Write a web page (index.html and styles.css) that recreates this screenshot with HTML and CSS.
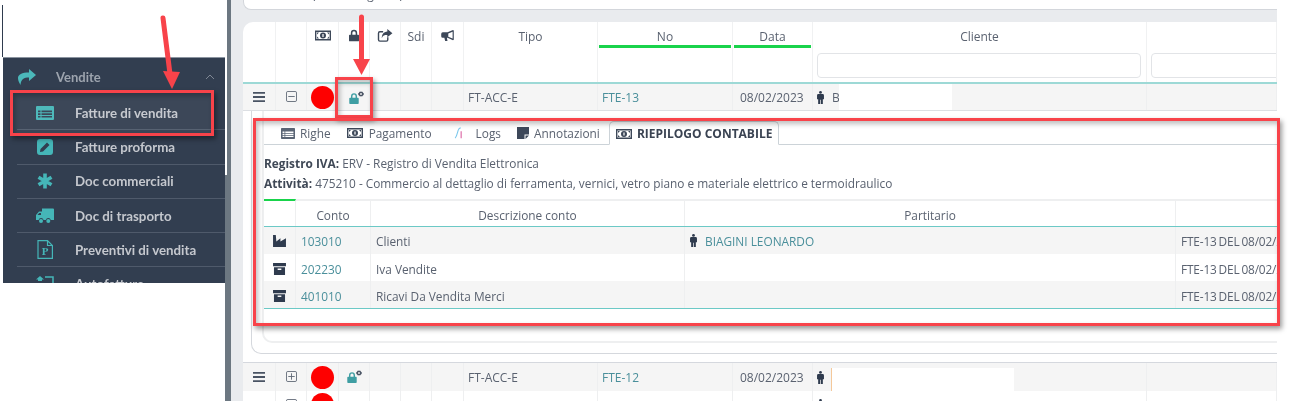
FILE: index.html
```html
<!DOCTYPE html>
<html lang="it">
<head>
    <meta charset="UTF-8">
    <title>Fatture di vendita</title>
    <link rel="stylesheet" href="styles.css">
</head>
<body>
    <svg class="sprite" xmlns="http://www.w3.org/2000/svg">
        <symbol id="i-share" viewBox="0 0 18 16"><path d="M11 0l7 6-7 6V8.500C6 8.500 3 10 2.500 16 .5 13 0 10.500 0 9c0-3.500 4-5.500 11-5.500z"/></symbol>
        <symbol id="i-list" viewBox="0 0 18 14"><path fill-rule="evenodd" d="M1 0h16a1 1 0 0 1 1 1v12a1 1 0 0 1-1 1H1a1 1 0 0 1-1-1V1a1 1 0 0 1 1-1zM2 4.500v1.700h2.500V4.500zM5.500 4.500v1.700H16V4.500zM2 7.200v1.700h2.500V7.200zM5.500 7.200v1.700H16V7.200zM2 9.900v1.700h2.500V9.900zM5.500 9.900v1.700H16V9.900z"/></symbol>
        <symbol id="i-pencil" viewBox="0 0 16 16"><path fill-rule="evenodd" d="M3 0h10a3 3 0 0 1 3 3v10a3 3 0 0 1-3 3H3a3 3 0 0 1-3-3V3a3 3 0 0 1 3-3zM3.500 10l-.5 3 3-.5 6.500-6.500-2.500-2.500z"/></symbol>
        <symbol id="i-asterisk" viewBox="0 0 16 16"><path fill="none" stroke="currentColor" stroke-width="3.600" d="M8 .5v15M1.500 4.200l13 7.600M14.500 4.200l-13 7.600"/></symbol>
        <symbol id="i-truck" viewBox="0 0 18 15"><path fill-rule="evenodd" d="M6 0h11a1 1 0 0 1 1 1v10.500h-3.200a2.600 2.600 0 0 0-5 0H7.600a2.600 2.600 0 0 0-5 0H0V6.500L3 3h3zM1.500 6.500H5V4.500H3.200z"/><circle cx="5" cy="12.500" r="2"/><circle cx="12.300" cy="12.500" r="2"/></symbol>
        <symbol id="i-file" viewBox="0 0 16 19"><path fill="none" stroke="currentColor" stroke-width="1.200" d="M1 .6h9.500L15.400 5.500V18.400H1zM10.500 .6V5.500h4.900"/></symbol>
        <symbol id="i-auto" viewBox="0 0 18 16"><path d="M0 3.500L4 0l4 3.500H6V5H2V3.500z"/><path fill="none" stroke="currentColor" stroke-width="1.500" d="M9 1h8v8"/></symbol>
        <symbol id="i-money" viewBox="0 0 16 12"><path fill-rule="evenodd" d="M0 1h16v10H0zM1.400 2.400v7.200h13.200V2.400z"/><path fill-rule="evenodd" d="M8 3a3 3 0 1 1 0 6 3 3 0 0 1 0-6zM7.400 4.500v3h1.200v-3z"/><path d="M2 3h2L2 5zM14 3v2l-2-2zM2 9V7l2 2zM14 9h-2l2-2z"/></symbol>
        <symbol id="i-lock" viewBox="0 0 12 14"><path fill-rule="evenodd" d="M2.200 6V4a3.800 3.800 0 0 1 7.600 0v2H11a1 1 0 0 1 1 1v6a1 1 0 0 1-1 1H1a1 1 0 0 1-1-1V7a1 1 0 0 1 1-1zM4 6h4V4a2 2 0 0 0-4 0z"/></symbol>
        <symbol id="i-out" viewBox="0 0 16 14"><path fill="none" stroke="currentColor" stroke-width="1.500" d="M6 3H2.500A1.500 1.500 0 0 0 1 4.500v7A1.500 1.500 0 0 0 2.500 13h7a1.500 1.500 0 0 0 1.500-1.500V9"/><path d="M10.500 0L16 4.500 10.500 9V6.500C7.500 6.500 5.500 7 4.500 10 4.500 6 6.500 3 10.500 2.700z"/></symbol>
        <symbol id="i-horn" viewBox="0 0 16 14"><path fill-rule="evenodd" d="M15 0l1 .5v12l-1 .5-7-3H7.200L8 14H5L4 10H2a2 2 0 0 1-2-2V5a2 2 0 0 1 2-2h6zM14.500 2.200L9 4.300v4.400l5.500 2.100z"/></symbol>
        <symbol id="i-bars" viewBox="0 0 12 10"><path d="M0 0h12v1.800H0zM0 4.100h12v1.800H0zM0 8.200h12V10H0z"/></symbol>
        <symbol id="i-minus" viewBox="0 0 12 12"><path fill="none" stroke="currentColor" d="M2 .5h8A1.500 1.500 0 0 1 11.500 2v8a1.500 1.500 0 0 1-1.500 1.500H2A1.500 1.500 0 0 1 .5 10V2A1.500 1.500 0 0 1 2 .5zM2.500 6h7"/></symbol>
        <symbol id="i-plus" viewBox="0 0 12 12"><path fill="none" stroke="currentColor" d="M2 .5h8A1.500 1.500 0 0 1 11.500 2v8a1.500 1.500 0 0 1-1.500 1.500H2A1.500 1.500 0 0 1 .5 10V2A1.500 1.500 0 0 1 2 .5zM2.500 6h7M6 2.500v7"/></symbol>
        <symbol id="i-gear" viewBox="0 0 8 8"><path fill-rule="evenodd" d="M4 0l.8 1.200L6.200 1 6.500 2.300 8 3 7.200 4 8 5.200 6.500 5.700 6.200 7 4.800 6.800 4 8 3.200 6.800 1.800 7 1.500 5.700 0 5.200.8 4 0 3 1.500 2.300 1.800 1 3.200 1.200zM4 2.800a1.200 1.200 0 1 0 0 2.400 1.200 1.200 0 0 0 0-2.400z"/></symbol>
        <symbol id="i-male" viewBox="0 0 8 15"><circle cx="4" cy="1.600" r="1.600"/><path d="M1.500 3.600h5A1.500 1.500 0 0 1 8 5.100V9.500H6.700V15H4.400V10H3.600v5H1.300V9.500H0V5.100a1.500 1.500 0 0 1 1.500-1.500z"/></symbol>
        <symbol id="i-factory" viewBox="0 0 14 13"><path d="M0 0h3l.6 7L8 3.500V7l6-3.500V13H0z"/></symbol>
        <symbol id="i-archive" viewBox="0 0 14 13"><path fill-rule="evenodd" d="M0 0h14v3.500H0zM1 4.500h12V13H1zM5 6v1.500h4V6z"/></symbol>
        <symbol id="i-note" viewBox="0 0 12 12"><path d="M0 0h12v7.500H7.500V12H0zM8.500 8.500H12L8.500 12z"/></symbol>
        <symbol id="i-logs" viewBox="0 0 10 14"><path fill="none" stroke="#7cc8ec" stroke-width="1.300" d="M.5 13C2.500 11 3 7 4 4 4.500 2.500 5.500 1 7 1"/><path fill="none" stroke="#d8579b" stroke-width="1.200" d="M7.500 5v8"/></symbol>
    </svg>

    <div class="shot">
        <aside class="sidebar">
            <div class="menu">
                <div class="menu-head">
                    <svg class="head-icon"><use href="#i-share"/></svg>
                    <span class="head-label">Vendite</span>
                    <svg class="chevron" viewBox="0 0 10 6"><path d="M1 5l4-4 4 4"/></svg>
                </div>
                <div class="menu-item"><svg class="menu-icon"><use href="#i-list"/></svg>Fatture di vendita</div>
                <div class="menu-item"><svg class="menu-icon"><use href="#i-pencil"/></svg>Fatture proforma</div>
                <div class="menu-item"><svg class="menu-icon"><use href="#i-asterisk"/></svg>Doc commerciali</div>
                <div class="menu-item"><svg class="menu-icon"><use href="#i-truck"/></svg>Doc di trasporto</div>
                <div class="menu-item">
                    <svg class="menu-icon tall" viewBox="0 0 16 19"><use href="#i-file" width="16" height="19"/><text class="file-letter" x="8" y="15">P</text></svg>
                    Preventivi di vendita
                </div>
                <div class="menu-item"><svg class="menu-icon"><use href="#i-auto"/></svg>Autofatture</div>
            </div>
        </aside>
        <div class="rail"></div>

        <main class="content">
            <div class="filter-panel"><span class="filter-text">(ultimi 30 giorni)</span></div>

            <section class="doc-panel">
                <div class="doc-row doc-head">
                    <div class="hcell"></div>
                    <div class="hcell"></div>
                    <div class="hcell"><svg class="hicon"><use href="#i-money"/></svg></div>
                    <div class="hcell"><svg class="hicon narrow"><use href="#i-lock"/></svg></div>
                    <div class="hcell"><svg class="hicon"><use href="#i-out"/></svg></div>
                    <div class="hcell">Sdi</div>
                    <div class="hcell"><svg class="hicon horn"><use href="#i-horn"/></svg></div>
                    <div class="hcell">Tipo</div>
                    <div class="hcell sorted"><span class="sort-label">No</span></div>
                    <div class="hcell sorted"><span class="sort-label">Data</span></div>
                    <div class="hcell">Cliente<input class="filter-input"></div>
                    <div class="hcell"><input class="filter-input wide"></div>
                </div>

                <div class="doc-row doc-line shaded first">
                    <div class="cell center"><svg class="bars"><use href="#i-bars"/></svg></div>
                    <div class="cell center"><svg class="toggle"><use href="#i-minus"/></svg></div>
                    <div class="cell center"><span class="status"></span></div>
                    <div class="cell lock-cell"><svg class="lock"><use href="#i-lock"/></svg><svg class="gear"><use href="#i-gear"/></svg></div>
                    <div class="cell"></div>
                    <div class="cell"></div>
                    <div class="cell"></div>
                    <div class="cell">FT-ACC-E</div>
                    <div class="cell link">FTE-13</div>
                    <div class="cell date">08/02/2023</div>
                    <div class="cell client"><svg class="male"><use href="#i-male"/></svg><span class="initial">B</span><span class="redact"></span></div>
                    <div class="cell"></div>
                </div>

                <div class="detail">
                    <div class="card">
                        <div class="subcard">
                            <div class="tabs">
                                <div class="tab"><svg class="tab-icon list"><use href="#i-list"/></svg>Righe</div>
                                <div class="tab"><svg class="tab-icon"><use href="#i-money"/></svg>Pagamento</div>
                                <div class="tab logs"><svg class="tab-icon"><use href="#i-logs"/></svg>Logs</div>
                                <div class="tab"><svg class="tab-icon small"><use href="#i-note"/></svg>Annotazioni</div>
                                <div class="tab active"><svg class="tab-icon"><use href="#i-money"/></svg>RIEPILOGO CONTABILE</div>
                            </div>
                            <div class="info">
                                <div><b>Registro IVA:</b> ERV - Registro di Vendita Elettronica</div>
                                <div><b>Attività:</b> 475210 - Commercio al dettaglio di ferramenta, vernici, vetro piano e materiale elettrico e termoidraulico</div>
                            </div>
                            <div class="ledger">
                                <div class="ledger-row ledger-head">
                                    <div class="lh mark"></div>
                                    <div class="lh">Conto</div>
                                    <div class="lh">Descrizione conto</div>
                                    <div class="lh">Partitario</div>
                                    <div class="lh"></div>
                                </div>
                                <div class="ledger-row shaded">
                                    <div class="lc center"><svg class="acc-icon"><use href="#i-factory"/></svg></div>
                                    <div class="lc link">103010</div>
                                    <div class="lc">Clienti</div>
                                    <div class="lc link"><svg class="male"><use href="#i-male"/></svg>BIAGINI LEONARDO</div>
                                    <div class="lc">FTE-13 DEL 08/02/2023</div>
                                </div>
                                <div class="ledger-row">
                                    <div class="lc center"><svg class="acc-icon"><use href="#i-archive"/></svg></div>
                                    <div class="lc link">202230</div>
                                    <div class="lc">Iva Vendite</div>
                                    <div class="lc"></div>
                                    <div class="lc">FTE-13 DEL 08/02/2023</div>
                                </div>
                                <div class="ledger-row shaded">
                                    <div class="lc center"><svg class="acc-icon"><use href="#i-archive"/></svg></div>
                                    <div class="lc link">401010</div>
                                    <div class="lc">Ricavi Da Vendita Merci</div>
                                    <div class="lc"></div>
                                    <div class="lc">FTE-13 DEL 08/02/2023</div>
                                </div>
                            </div>
                        </div>
                    </div>
                </div>

                <div class="doc-row doc-line tall-line shaded">
                    <div class="cell center"><svg class="bars"><use href="#i-bars"/></svg></div>
                    <div class="cell center"><svg class="toggle"><use href="#i-plus"/></svg></div>
                    <div class="cell center"><span class="status"></span></div>
                    <div class="cell lock-cell offset"><svg class="lock"><use href="#i-lock"/></svg><svg class="gear"><use href="#i-gear"/></svg></div>
                    <div class="cell"></div>
                    <div class="cell"></div>
                    <div class="cell"></div>
                    <div class="cell">FT-ACC-E</div>
                    <div class="cell link">FTE-12</div>
                    <div class="cell date">08/02/2023</div>
                    <div class="cell client"><svg class="male"><use href="#i-male"/></svg><span class="redact long"></span></div>
                    <div class="cell"></div>
                </div>

                <div class="doc-row doc-line tall-line last">
                    <div class="cell center"><svg class="bars"><use href="#i-bars"/></svg></div>
                    <div class="cell center"><svg class="toggle"><use href="#i-plus"/></svg></div>
                    <div class="cell center"><span class="status"></span></div>
                    <div class="cell lock-cell"></div>
                    <div class="cell"></div>
                    <div class="cell"></div>
                    <div class="cell"></div>
                    <div class="cell">FT-ACC-E</div>
                    <div class="cell link">FTE-11</div>
                    <div class="cell date">04/02/2023</div>
                    <div class="cell client"><svg class="male"><use href="#i-male"/></svg></div>
                    <div class="cell"></div>
                </div>
            </section>
        </main>

        <!-- annotazioni rosse sopra lo screenshot -->
        <div class="red-box box-menu"></div>
        <div class="red-box box-lock"></div>
        <div class="red-box box-detail"></div>
        <svg class="arrows" viewBox="0 0 1290 401">
            <path class="shaft" d="M163 18L170 74"/>
            <path class="head" d="M163 71L180 72 172 89z"/>
            <path class="shaft" d="M361.500 17V62"/>
            <path class="head" d="M353 59H370L361.500 75z"/>
        </svg>
    </div>
</body>
</html>
```

FILE: styles.css
```css
* {
    box-sizing: border-box;
}
html, body {
    margin: 0;
    padding: 0;
    background: white;
}
.sprite {
    position: absolute;
    width: 0;
    height: 0;
}
.shot {
    position: relative;
    display: flex;
    width: 1290px;
    height: 401px;
    overflow: hidden;
    font-family: "Open Sans", "Noto Sans", sans-serif;
    font-size: 12px;
    color: #5a6270;
    filter: blur(0.35px);
}

/* sidebar */
.sidebar {
    width: 225px;
    padding: 57px 0 0 3px;
    background: linear-gradient(#2f3b4e, #2f3b4e) 2px 5px / 1px 52px no-repeat, white;
    flex: none;
}
.menu {
    height: 226px;
    overflow: hidden;
    background: #323e50;
    border-top: 1px solid #8b94a0;
    font-family: Lato, "Open Sans", sans-serif;
    font-weight: 700;
    font-size: 13.3px;
    color: #c5c8ce;
}
.menu-head {
    display: flex;
    align-items: center;
    height: 38px;
    padding: 0 10px 0 15px;
}
.head-icon {
    width: 18px;
    height: 16px;
    fill: #4bb8ba;
}
.head-label {
    margin-left: 20px;
    font-size: 13px;
    color: #9da4ae;
}
.chevron {
    width: 10px;
    height: 6px;
    margin-left: auto;
    fill: none;
    stroke: #7f8794;
    stroke-width: 1;
}
.menu-item {
    display: flex;
    align-items: center;
    height: 34.3px;
    margin-left: 14px;
    padding-left: 19px;
    border-bottom: 1px solid #4f5a6b;
    white-space: nowrap;
}
.menu-item:first-of-type {
    border-top: 1px solid #4f5a6b;
}
.menu-icon {
    flex: none;
    width: 18px;
    height: 16px;
    margin-right: 21px;
    color: #45b6b8;
    fill: #45b6b8;
}
.menu-icon.tall {
    height: 19px;
}
.file-letter {
    font-family: "Liberation Serif", serif;
    font-size: 11px;
    font-weight: 700;
    text-anchor: middle;
}
.rail {
    flex: none;
    width: 6px;
    background: linear-gradient(90deg, white 2px, transparent 2px) 0 0 / 100% 175px no-repeat, #6c7781;
}

/* contenuto */
.content {
    flex: none;
    width: 1046px;
    padding-left: 12px;
    background: #e9ebee;
    color: #5a6270;
}
.filter-panel {
    height: 10px;
    overflow: hidden;
    background: white;
    border: 1px solid #d3d6db;
    border-width: 0 0 1px 1px;
    border-bottom-left-radius: 8px;
}
.filter-text {
    display: block;
    margin: -14px 0 0 68px;
    line-height: 17px;
}
.doc-panel {
    height: 379px;
    margin-top: 12px;
    overflow: hidden;
    background: white;
    border-top-left-radius: 10px;
}
.doc-row {
    display: grid;
    grid-template-columns: 33px 31px 32px 31px 31px 31px 32px 134px 135px 80px 334px 130px;
}
.doc-head {
    height: 62px;
    border-bottom: 2px solid #9dd9d6;
}
.hcell {
    position: relative;
    padding-top: 7px;
    line-height: 16px;
    text-align: center;
    border-right: 1px solid #f0f1f2;
    overflow: hidden;
}
.hicon {
    width: 16px;
    height: 13px;
    color: #3d4859;
    fill: #3d4859;
}
.hicon.narrow {
    width: 10px;
}
.hicon.horn {
    width: 13px;
    height: 11px;
}
.sort-label {
    display: block;
    height: 19px;
    margin: 0 1px;
    border-bottom: 3px solid #19d34b;
}
.filter-input {
    display: block;
    width: 324px;
    height: 25px;
    margin: 8px 0 0 4px;
    background: white;
    border: 1px solid #e2e4e7;
    border-radius: 4px;
}
.filter-input.wide {
    width: 200px;
    margin-top: 24px;
}
.doc-line {
    height: 27px;
    border-bottom: 1px solid #dcdfe3;
}
.doc-line.tall-line {
    height: 29px;
    border-bottom: none;
}
.shaded {
    background: #f5f5f5;
}
.tall-line.shaded {
    border-top: 1px solid #d5d8de;
}
.cell {
    display: flex;
    align-items: center;
    padding-left: 4px;
    border-right: 1px solid #eeeff0;
    white-space: nowrap;
}
.center {
    justify-content: center;
    padding-left: 0;
}
.link {
    color: #4a8f9b;
}
.date {
    padding-left: 7px;
}
.bars {
    width: 12px;
    height: 10px;
    margin-right: 1px;
    fill: #4a5464;
}
.toggle {
    width: 11px;
    height: 11px;
    color: #5f6875;
    margin-bottom: 2px;
}
.status {
    display: block;
    flex: none;
    width: 23px;
    height: 23px;
    margin-right: 1px;
    border-radius: 50%;
    background: #fe0000;
}
.last .status {
    margin-top: -3px;
}
.lock-cell {
    align-items: flex-start;
    padding: 9px 0 0 10px;
}
.lock-cell.offset {
    padding-left: 8px;
}
.lock {
    width: 10px;
    height: 11px;
    fill: #3f9ea3;
}
.gear {
    width: 6px;
    height: 6px;
    margin: -2px 0 0 -1px;
    fill: #4a5464;
}
.male {
    flex: none;
    width: 7px;
    height: 13px;
    fill: #2f3b4e;
}
.client {
    align-items: stretch;
}
.client .male {
    align-self: center;
}
.initial {
    align-self: center;
    margin-left: 8px;
}
.redact {
    width: 113px;
    margin-left: -1px;
    background: white;
}
.redact.long {
    width: 183px;
    margin: 5px 0 0 7px;
    border-left: 1px solid #f4c89a;
}

/* dettaglio */
.detail {
    height: 251px;
    padding-left: 8px;
    font-size: 11.85px;
}
.card {
    height: 243px;
    padding-left: 10px;
    border-left: 1px solid #d5d8dd;
    border-bottom: 1px solid #d5d8dd;
    border-bottom-left-radius: 10px;
}
.subcard {
    height: 232px;
    padding-top: 10px;
    border-left: 2px solid #eeeff0;
    border-bottom: 2px solid #eeeff0;
    border-bottom-left-radius: 10px;
}
.tabs {
    display: flex;
    height: 24px;
    padding-left: 9px;
    border-bottom: 1px solid #ccd3d8;
}
.tab {
    display: flex;
    align-items: center;
    gap: 5px;
    padding: 1px 8px 0;
    white-space: nowrap;
}
.tab:nth-child(2) {
    gap: 6px;
}
.tab.logs {
    gap: 9px;
    margin-left: 3px;
}
.tab-icon {
    flex: none;
    width: 16px;
    height: 12px;
    color: #3d4859;
    fill: #3d4859;
}
.tab-icon.list {
    width: 14px;
    height: 11px;
    fill: #5a6575;
}
.tab-icon.small {
    width: 12px;
}
.tab.active {
    height: 24px;
    margin-left: 1px;
    padding: 1px 6px 0;
    background: white;
    border: 1px solid #ccd3d8;
    border-bottom-color: white;
    border-radius: 5px 5px 0 0;
    font-size: 12px;
    font-weight: 700;
    color: #3a4352;
}
.info {
    height: 49px;
    padding-top: 9px;
    line-height: 19.5px;
}
.info b {
    color: #3f4856;
}
.ledger {
    margin-top: 5px;
    width: 1020px;
}
.ledger-row {
    display: grid;
    grid-template-columns: 32px 75px 314px 491px 200px;
    height: 27px;
}
.ledger-head {
    height: 28px;
    border-bottom: 1.5px solid #6cc9c6;
}
.ledger-row:last-child {
    height: 28px;
    border-bottom: 1.5px solid #6cc9c6;
}
.lh {
    padding-top: 6px;
    text-align: center;
    border-top: 2px solid #eeeff0;
    border-right: 1px solid #eeeff0;
}
.lh.mark {
    border-top-color: #19d34b;
}
.lc {
    display: flex;
    align-items: center;
    padding: 2px 0 0 5px;
    white-space: nowrap;
    border-right: 1px solid #eeeff0;
}
.ledger-head + .ledger-row .lc {
    padding-top: 0;
}
.lc:last-child {
    letter-spacing: -0.15px;
    word-spacing: -1px;
}
.lc.center {
    padding-left: 0;
    justify-content: center;
}
.lc .male {
    margin-right: 8px;
}
.acc-icon {
    width: 13px;
    height: 12px;
    fill: #2f3b4e;
}

/* annotazioni */
.red-box {
    position: absolute;
    border: 3px solid #f8434a;
    box-shadow: 2px 3px 5px rgba(0, 0, 0, 0.4), inset 2px 3px 5px rgba(0, 0, 0, 0.25);
}
.box-menu {
    left: 10px;
    top: 90px;
    width: 204px;
    height: 46px;
    background: rgba(255, 255, 255, 0.05);
}
.box-lock {
    left: 335px;
    top: 77px;
    width: 38px;
    height: 41px;
}
.box-detail {
    left: 253px;
    top: 118px;
    width: 1027px;
    height: 208px;
}
.arrows {
    position: absolute;
    left: 0;
    top: 0;
    width: 1290px;
    height: 401px;
}
.shaft {
    fill: none;
    stroke: #f8434a;
    stroke-width: 5;
    stroke-linecap: round;
}
.head {
    fill: #f8434a;
}
```
